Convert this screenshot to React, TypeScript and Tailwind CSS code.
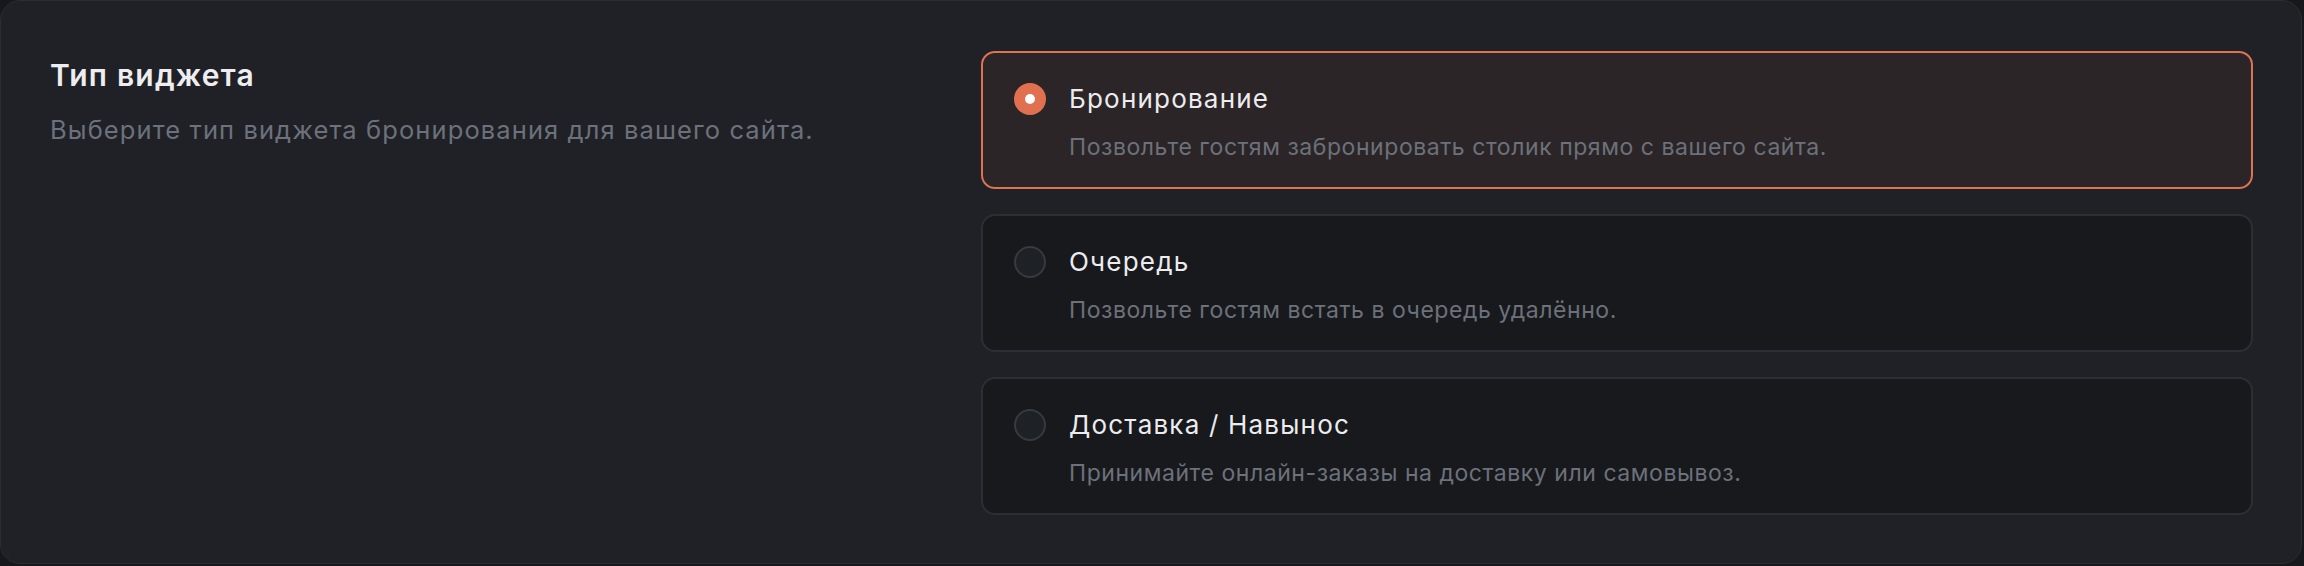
import React from "react";

type Option = {
  id: string;
  title: string;
  description: string;
};

const OPTIONS: Option[] = [
  {
    id: "booking",
    title: "Бронирование",
    description: "Позвольте гостям забронировать столик прямо с вашего сайта.",
  },
  {
    id: "queue",
    title: "Очередь",
    description: "Позвольте гостям встать в очередь удалённо.",
  },
  {
    id: "delivery",
    title: "Доставка / Навынос",
    description: "Принимайте онлайн-заказы на доставку или самовывоз.",
  },
];

function Radio({ checked }: { checked: boolean }) {
  if (checked) {
    return (
      <span className="flex size-[32px] shrink-0 items-center justify-center rounded-full bg-[#e07050]">
        <span className="size-[10px] rounded-full bg-white" />
      </span>
    );
  }
  return (
    <span className="size-[32px] shrink-0 rounded-full border-2 border-[#363a41] bg-[#1e2126]" />
  );
}

function OptionCard({ option, checked }: { option: Option; checked: boolean }) {
  return (
    <div
      className={`flex gap-[23px] rounded-[14px] border-2 pl-[31px] pr-8 pt-[30px] pb-[25px] ${
        checked
          ? "border-[#df7252] bg-[#2b2527]"
          : "border-[#2b2e34] bg-[#17191c]"
      }`}
    >
      <Radio checked={checked} />
      <div className="flex flex-col">
        <p className="text-[26px] leading-[32px] tracking-[1.2px] text-[#ececef]">
          {option.title}
        </p>
        <p className="mt-[17px] text-[23px] leading-[30px] tracking-[0.55px] text-[#6c717b]">
          {option.description}
        </p>
      </div>
    </div>
  );
}

export default function App() {
  const selected = "booking";

  return (
    <div
      className="h-[566px] w-[2304px] bg-[#17181b]"
      style={{ fontFamily: "Inter, 'Noto Sans', sans-serif" }}
    >
      <div className="flex h-[564px] w-[2302px] rounded-[20px] border border-[#2a2d33] bg-[#1f2127] pl-[49px] pr-[48px] pt-[50px]">
        <div className="flex-1">
          <h2 className="mt-[4px] text-[30px] font-semibold leading-[40px] tracking-[1.2px] text-[#eeeef0]">
            Тип виджета
          </h2>
          <p className="mt-[19px] text-[25.5px] leading-[32px] tracking-[1.1px] text-[#6c717b]">
            Выберите тип виджета бронирования для вашего сайта.
          </p>
        </div>
        <div className="flex w-[1272px] flex-col gap-[25px]">
          {OPTIONS.map((o) => (
            <OptionCard key={o.id} option={o} checked={o.id === selected} />
          ))}
        </div>
      </div>
    </div>
  );
}
